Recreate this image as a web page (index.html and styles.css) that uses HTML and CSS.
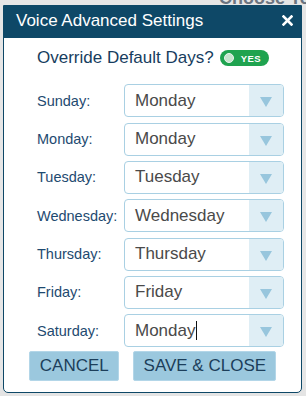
FILE: index.html
```html
<!DOCTYPE html>
<html>
<head>
<meta charset="utf-8">
<link rel="stylesheet" href="styles.css">
</head>
<body>
<div class="page">
  <div class="page-title">Choose Template</div>
</div>
<div class="modal">
  <div class="modal-header">
    <span class="modal-title">Voice Advanced Settings</span>
    <svg class="close" width="11" height="11" viewBox="0 0 11 11"><path d="M1.5 1.5 L9.5 9.5 M9.5 1.5 L1.5 9.5" stroke="#fff" stroke-width="2.6" stroke-linecap="square"/></svg>
  </div>
  <div class="modal-body">
    <div class="override">
      <span class="override-text">Override Default Days?</span>
      <span class="toggle"><span class="knob"></span><span class="yes">YES</span></span>
    </div>
    <div class="rows">
      <label class="day">Sunday:</label>
      <div class="select"><span class="val">Monday</span><span class="arrow"><i></i></span></div>
      <label class="day">Monday:</label>
      <div class="select"><span class="val">Monday</span><span class="arrow"><i></i></span></div>
      <label class="day">Tuesday:</label>
      <div class="select"><span class="val">Tuesday</span><span class="arrow"><i></i></span></div>
      <label class="day">Wednesday:</label>
      <div class="select"><span class="val">Wednesday</span><span class="arrow"><i></i></span></div>
      <label class="day">Thursday:</label>
      <div class="select"><span class="val">Thursday</span><span class="arrow"><i></i></span></div>
      <label class="day">Friday:</label>
      <div class="select"><span class="val">Friday</span><span class="arrow"><i></i></span></div>
      <label class="day">Saturday:</label>
      <div class="select"><span class="val">Monday<span class="caret"></span></span><span class="arrow"><i></i></span></div>
    </div>
    <div class="buttons">
      <button class="btn btn-cancel">CANCEL</button>
      <button class="btn btn-save">SAVE &amp; CLOSE</button>
    </div>
  </div>
</div>
</body>
</html>
```
FILE: styles.css
```css
html, body {
  margin: 0;
  padding: 0;
}
body {
  width: 306px;
  height: 396px;
  overflow: hidden;
  background: #e4e4e4;
  font-family: "Liberation Sans", Arial, sans-serif;
  position: relative;
}
.page {
  height: 396px;
  background: #e6e6e6;
}
.page-title {
  padding-left: 219px;
  margin-top: -12px;
  font-size: 18px;
  font-weight: bold;
  color: #6b7480;
  white-space: nowrap;
  overflow: hidden;
}
.modal {
  position: absolute;
  top: 5px;
  left: 3px;
  width: 297px;
  height: 386px;
  border: 1px solid #0e4867;
  border-radius: 0 0 5px 5px;
  background: #fff;
  display: flex;
  flex-direction: column;
}
.modal-header {
  height: 32px;
  background: #0e4867;
  display: flex;
  align-items: center;
  justify-content: space-between;
  padding: 0 8px 0 12px;
}
.modal-title {
  color: #fff;
  font-size: 17px;
  line-height: 20px;
  margin-top: -2px;
}
.close {
  display: block;
  margin-top: -3px;
}
.modal-body {
  padding: 10px 0 0 33px;
}
.override {
  display: flex;
  align-items: center;
  height: 19px;
}
.override-text {
  font-size: 17px;
  color: #173d5e;
  line-height: 19px;
}
.toggle {
  margin-left: 6px;
  width: 49px;
  height: 16px;
  border-radius: 8px;
  background: #1fa34f;
  display: flex;
  align-items: center;
  margin-top: 1px;
}
.knob {
  width: 10px;
  height: 10px;
  border-radius: 50%;
  background: #c6e4cd;
  border: 1.5px solid #e8f5ec;
  box-sizing: border-box;
  margin-left: 4px;
}
.yes {
  color: #fff;
  font-size: 9.5px;
  font-weight: bold;
  margin-left: 7px;
  letter-spacing: 0.4px;
}
.rows {
  margin-top: 17.3px;
  display: grid;
  grid-template-columns: 87px 160px;
  grid-auto-rows: 33px;
  row-gap: 5.33px;
  align-items: center;
}
.day {
  font-size: 14.5px;
  color: #1e4a70;
}
.select {
  height: 33px;
  box-sizing: border-box;
  border: 1px solid #a9d0e3;
  border-radius: 4px;
  display: flex;
  align-items: center;
  overflow: hidden;
}
.val {
  flex: 1;
  padding-left: 10px;
  font-size: 17px;
  color: #4a4a4a;
  display: flex;
  align-items: center;
}
.caret {
  display: inline-block;
  width: 1px;
  height: 19px;
  background: #111;
  margin-left: 1px;
}
.arrow {
  width: 34px;
  height: 100%;
  background: #dfeef5;
  display: flex;
  align-items: center;
  justify-content: center;
}
.arrow i {
  width: 0;
  height: 0;
  border-left: 6.5px solid transparent;
  border-right: 6.5px solid transparent;
  border-top: 10px solid #98c6dd;
  margin-top: 3px;
}
.buttons {
  margin-top: 4px;
  margin-left: -7.7px;
  display: flex;
  gap: 14px;
}
.btn {
  height: 30px;
  border: 1px solid #b3d6e8;
  border-radius: 2px;
  background: #9bc8de;
  color: #1c3e5a;
  font-family: "Liberation Sans", Arial, sans-serif;
  font-size: 17px;
  padding: 0;
  margin: 0;
}
.btn-cancel {
  width: 90px;
}
.btn-save {
  width: 143px;
}
```
